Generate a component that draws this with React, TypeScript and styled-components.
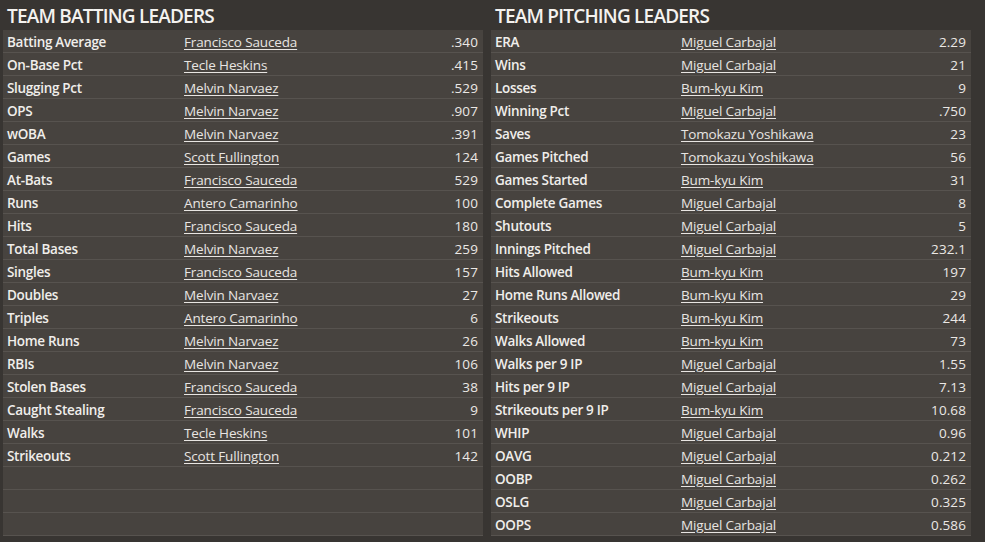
import React from "react";
import styled, { createGlobalStyle } from "styled-components";

const Global = createGlobalStyle`
  html, body { margin: 0; padding: 0; background: #383532; }
  body { font-family: "Open Sans", "Noto Sans", sans-serif; color: #ece9e6; }
`;

const Page = styled.div`
  display: flex;
  gap: 8px;
  padding: 0 0 0 3px;
  width: 985px;
  height: 542px;
  box-sizing: border-box;
  background: #383532;
  overflow: hidden;
`;

const Panel = styled.section`
  display: flex;
  flex-direction: column;
  width: 480px;
`;

const Title = styled.h2`
  margin: 0;
  height: 30px;
  padding: 4px 0 0 4px;
  box-sizing: border-box;
  font-size: 19px;
  line-height: 25px;
  font-weight: 600;
  letter-spacing: -0.8px;
  color: #f4f2ef;
`;

const Table = styled.div<{ $labelCol: number }>`
  display: grid;
  grid-template-columns: ${(p) => p.$labelCol}px 1fr 90px;
  background: #47433f;
`;

const Cell = styled.div<{ $align?: "left" | "right" }>`
  height: 23px;
  box-sizing: border-box;
  border-bottom: 1px solid #57534f;
  display: flex;
  align-items: center;
  justify-content: ${(p) => (p.$align === "right" ? "flex-end" : "flex-start")};
  padding: 1px 5px 0 4px;
  font-size: 13.5px;
  white-space: nowrap;
`;

const Label = styled(Cell)`
  font-weight: 600;
  letter-spacing: -0.3px;
  color: #f0eeeb;
`;

const NameLink = styled.a`
  color: #e8e5e2;
  text-decoration: underline;
  text-underline-offset: 2px;
  letter-spacing: -0.15px;
  cursor: pointer;
`;

const Value = styled(Cell)`
  color: #ebe8e5;
  letter-spacing: 0.1px;
`;

type Row = [string, string, string];

const batting: Row[] = [
  ["Batting Average", "Francisco Sauceda", ".340"],
  ["On-Base Pct", "Tecle Heskins", ".415"],
  ["Slugging Pct", "Melvin Narvaez", ".529"],
  ["OPS", "Melvin Narvaez", ".907"],
  ["wOBA", "Melvin Narvaez", ".391"],
  ["Games", "Scott Fullington", "124"],
  ["At-Bats", "Francisco Sauceda", "529"],
  ["Runs", "Antero Camarinho", "100"],
  ["Hits", "Francisco Sauceda", "180"],
  ["Total Bases", "Melvin Narvaez", "259"],
  ["Singles", "Francisco Sauceda", "157"],
  ["Doubles", "Melvin Narvaez", "27"],
  ["Triples", "Antero Camarinho", "6"],
  ["Home Runs", "Melvin Narvaez", "26"],
  ["RBIs", "Melvin Narvaez", "106"],
  ["Stolen Bases", "Francisco Sauceda", "38"],
  ["Caught Stealing", "Francisco Sauceda", "9"],
  ["Walks", "Tecle Heskins", "101"],
  ["Strikeouts", "Scott Fullington", "142"],
];

const pitching: Row[] = [
  ["ERA", "Miguel Carbajal", "2.29"],
  ["Wins", "Miguel Carbajal", "21"],
  ["Losses", "Bum-kyu Kim", "9"],
  ["Winning Pct", "Miguel Carbajal", ".750"],
  ["Saves", "Tomokazu Yoshikawa", "23"],
  ["Games Pitched", "Tomokazu Yoshikawa", "56"],
  ["Games Started", "Bum-kyu Kim", "31"],
  ["Complete Games", "Miguel Carbajal", "8"],
  ["Shutouts", "Miguel Carbajal", "5"],
  ["Innings Pitched", "Miguel Carbajal", "232.1"],
  ["Hits Allowed", "Bum-kyu Kim", "197"],
  ["Home Runs Allowed", "Bum-kyu Kim", "29"],
  ["Strikeouts", "Bum-kyu Kim", "244"],
  ["Walks Allowed", "Bum-kyu Kim", "73"],
  ["Walks per 9 IP", "Miguel Carbajal", "1.55"],
  ["Hits per 9 IP", "Miguel Carbajal", "7.13"],
  ["Strikeouts per 9 IP", "Bum-kyu Kim", "10.68"],
  ["WHIP", "Miguel Carbajal", "0.96"],
  ["OAVG", "Miguel Carbajal", "0.212"],
  ["OOBP", "Miguel Carbajal", "0.262"],
  ["OSLG", "Miguel Carbajal", "0.325"],
  ["OOPS", "Miguel Carbajal", "0.586"],
];

const TOTAL_ROWS = 22;

function Leaders({ title, rows, labelCol }: { title: string; rows: Row[]; labelCol: number }) {
  const filled: (Row | null)[] = [...rows];
  while (filled.length < TOTAL_ROWS) filled.push(null);
  return (
    <Panel>
      <Title>{title}</Title>
      <Table $labelCol={labelCol}>
        {filled.map((r, i) => (
          <React.Fragment key={i}>
            <Label>{r ? r[0] : ""}</Label>
            <Cell>{r ? <NameLink>{r[1]}</NameLink> : ""}</Cell>
            <Value $align="right">{r ? r[2] : ""}</Value>
          </React.Fragment>
        ))}
      </Table>
    </Panel>
  );
}

export default function App() {
  return (
    <>
      <Global />
      <Page>
        <Leaders title="TEAM BATTING LEADERS" rows={batting} labelCol={177} />
        <Leaders title="TEAM PITCHING LEADERS" rows={pitching} labelCol={186} />
      </Page>
    </>
  );
}
